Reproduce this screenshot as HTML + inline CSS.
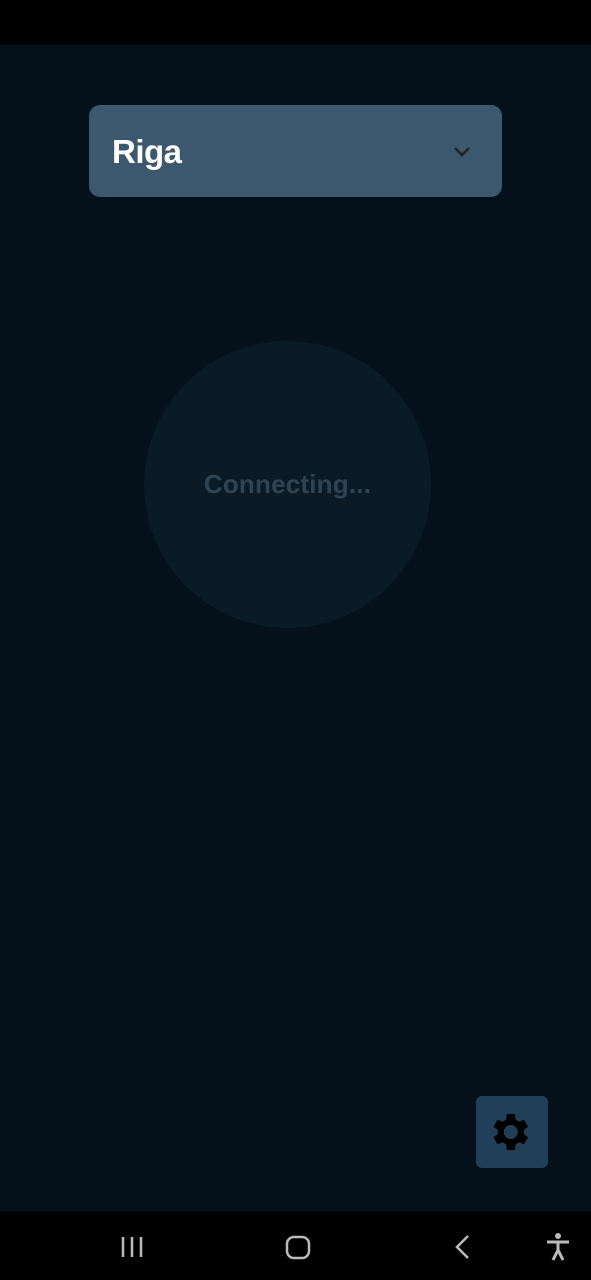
<!DOCTYPE html>
<html><head><style>
body{margin:0;width:591px;height:1280px;background:#04111b;position:relative;overflow:hidden;font-family:"Liberation Sans",sans-serif}
.top{position:absolute;left:0;top:0;width:591px;height:45px;background:#000}
.nav{position:absolute;left:0;top:1211px;width:591px;height:69px;background:#000}
.sel{position:absolute;left:89px;top:105px;width:413px;height:92px;background:#3c586e;border-radius:11px}
.sel span{position:absolute;left:23px;top:28px;color:#fff;font-weight:bold;font-size:33px;letter-spacing:-0.5px}
.circ{position:absolute;left:144px;top:341px;width:287px;height:287px;border-radius:50%;background:#0a1b26;display:flex;align-items:center;justify-content:center;color:#2f4452;font-weight:bold;font-size:26px;letter-spacing:0.2px}
.gear{position:absolute;left:476px;top:1096px;width:72px;height:72px;background:#223f58;border-radius:6px}
</style></head><body>
<div class="top"></div>
<div class="sel"><span>Riga</span>
<svg style="position:absolute;left:363px;top:40px" width="20" height="14" viewBox="0 0 20 14"><path d="M3 3l7 7 7-7" stroke="#222" stroke-width="2.5" fill="none"/></svg></div>
<div class="circ">Connecting...</div>
<div class="gear"><svg style="position:absolute;left:9px;top:12px" width="48" height="48" viewBox="0 0 24 24"><path fill="#000" d="M19.4 13a7.5 7.5 0 000-2l2.1-1.6-2-3.5-2.5 1a7 7 0 00-1.7-1L14.9 3h-4l-.4 2.9a7 7 0 00-1.7 1l-2.5-1-2 3.5L6.4 11a7.5 7.5 0 000 2l-2.1 1.6 2 3.5 2.5-1a7 7 0 001.7 1l.4 2.9h4l.4-2.9a7 7 0 001.7-1l2.5 1 2-3.5zM12.9 15.5a3.5 3.5 0 110-7 3.5 3.5 0 010 7z"/></svg></div>
<div class="nav">
<svg style="position:absolute;left:120px;top:24px" width="26" height="24"><path d="M3 2v20M12 2v20M21 2v20" stroke="#bbb" stroke-width="2.5"/></svg>
<svg style="position:absolute;left:284px;top:23px" width="28" height="28"><rect x="3" y="3" width="22" height="21" rx="7" stroke="#bbb" stroke-width="2.5" fill="none"/></svg>
<svg style="position:absolute;left:452px;top:23px" width="20" height="26"><path d="M16 2L5 13l11 11" stroke="#bbb" stroke-width="2.5" fill="none"/></svg>
<svg style="position:absolute;left:544px;top:20px" width="28" height="32"><circle cx="14" cy="5" r="3" fill="#bbb"/><path d="M3 11h22M14 11v8M14 19l-5 10M14 19l5 10" stroke="#bbb" stroke-width="3" fill="none"/></svg>
</div>
</body></html>
